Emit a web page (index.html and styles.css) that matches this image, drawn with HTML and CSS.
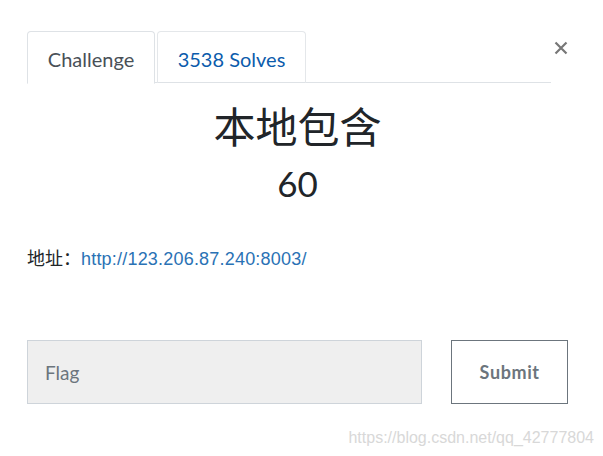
FILE: index.html
```html
<!DOCTYPE html>
<html lang="zh">
<head>
<meta charset="utf-8">
<title>Challenge</title>
<link rel="stylesheet" href="styles.css">
</head>
<body>
<div class="modal">
  <div class="tabs-row">
    <ul class="tabs">
      <li class="tab active">Challenge</li>
      <li class="tab link">3538 Solves</li>
    </ul>
    <button class="close" aria-label="Close">
      <svg width="14" height="14" viewBox="0 0 14 14"><path d="M1.5 1.5 L12.5 12.5 M12.5 1.5 L1.5 12.5" stroke="#777" stroke-width="2.2" fill="none"/></svg>
    </button>
  </div>
  <h2 class="title">本地包含</h2>
  <h3 class="value">60</h3>
  <p class="desc">地址：<a href="#">http://123.206.87.240:8003/</a></p>
  <form class="submit-row">
    <input class="flag" type="text" placeholder="Flag">
    <button class="submit" type="button">Submit</button>
  </form>
  <div class="watermark">https://blog.csdn.net/qq_42777804</div>
</div>
</body>
</html>
```

FILE: styles.css
```css
html, body { margin: 0; padding: 0; background: #fff; }
body { font-family: Lato, "Noto Sans CJK SC", sans-serif; color: #212529; }
.modal { width: 603px; height: 456px; padding: 31px 35px 0 27px; box-sizing: border-box; display: flex; flex-direction: column; }
.tabs-row { display: flex; align-items: flex-start; }
.tabs { list-style: none; margin: 0; padding: 0; display: flex; flex: 0 0 524px; border-bottom: 1px solid #dee2e6; height: 52px; box-sizing: border-box; gap: 2px; }
.tab { height: 52px; box-sizing: border-box; border: 1px solid #e4e7ea; border-bottom: none; border-radius: 4px 4px 0 0; font-size: 20px; padding-top: 3px; display: flex; align-items: center; justify-content: center; }
.tab.active { width: 128px; color: #495057; background: #fff; border-color: #dee2e6; border-bottom: 1px solid #fff; height: 53px; }
.tab.link { width: 149px; color: #0c5cac; height: 52px; }
.close { margin-left: 3px; margin-top: 10px; width: 14px; height: 14px; padding: 0; border: none; background: none; display: flex; }
.title { margin: 17px 0 0; text-align: center; font-family: "Noto Sans CJK SC", sans-serif; font-weight: 400; font-size: 42px; line-height: 50px; color: #212529; }
.value { margin: 12px 0 0; text-align: center; font-weight: 400; font-size: 35px; line-height: 42px; color: #212529; }
.desc { margin: 44px 0 0; font-family: "Liberation Sans", "Noto Sans CJK SC", sans-serif; font-size: 18px; line-height: 22px; color: #212529; }
.desc a { color: #2a72b5; text-decoration: none; letter-spacing: 0.2px; }
.submit-row { margin: 70px 0 0; display: flex; gap: 29px; }
.flag { width: 396px; height: 64px; box-sizing: border-box; border: 1px solid #ced4da; background: #efefef; padding: 0 17px; font-family: Lato, sans-serif; font-size: 19px; color: #6c757d; outline: none; }
.flag::placeholder { color: #6c757d; }
.submit { width: 117px; height: 64px; box-sizing: border-box; border: 1px solid #6c757d; background: #fff; font-family: Lato, sans-serif; font-weight: 700; font-size: 18px; color: #6c757d; letter-spacing: 0.6px; }
.watermark { align-self: flex-end; margin: 25px -26px 0 0; font-family: "Liberation Sans", sans-serif; font-size: 16px; color: #d8d8d8; }
```
